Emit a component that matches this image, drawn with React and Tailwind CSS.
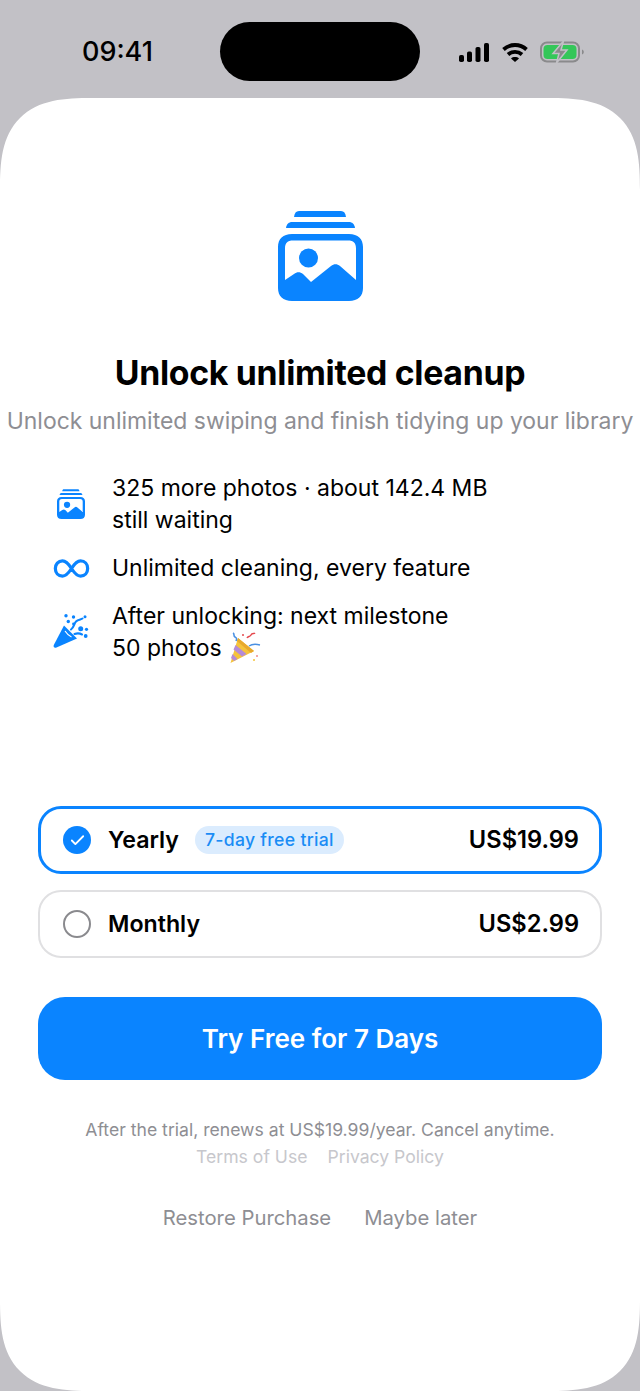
import { Check } from 'lucide-react';

const font = { fontFamily: 'Inter, "Noto Sans", sans-serif' };

function PhotoStack({ className }) {
  return (
    <svg viewBox="0 0 85 91" className={className} fill="#0a84ff">
      <path d="M16 7C16.500 3 18 1 21 1h42c3 0 4.500 2 5 6H16z" />
      <path d="M8 18c.5-4 3-6 6-6h57c3 0 5.500 2 6 6H8z" />
      <path
        fillRule="evenodd"
        d="M14 24h57c9 0 14 5 14 13v41c0 8-5 13-14 13H14C5 91 0 86 0 78V37c0-8 5-13 14-13zm1 6.500c-5.500 0-8 2.500-8 8V70l9-6c3-2.500 6-2.500 9 0l8 8 20-16c3-2.500 6-2.500 9 0L78 70V38.500c0-5.500-2.500-8-8-8H15z"
      />
      <circle cx="30.500" cy="48" r="9.500" />
    </svg>
  );
}

function Popper({ className }) {
  return (
    <svg viewBox="0 0 36 36" className={className} fill="#0a84ff">
      <path d="M11 11.500 24 24.500 3.500 33.500C1.500 34.300 0 33 .8 31L11 11.500z" />
      <path d="M12 17c2 3 4 5 6.500 6" fill="none" stroke="#fff" strokeWidth="1.200" />
      <circle cx="13" cy="1.800" r="1.700" />
      <circle cx="20.500" cy="3" r="1.700" />
      <circle cx="32" cy="2.800" r="1.500" />
      <circle cx="15.300" cy="7.500" r="1.700" />
      <circle cx="27.700" cy="14.700" r="2.500" />
      <circle cx="33.500" cy="15.300" r="1.600" />
      <circle cx="32.700" cy="22" r="1.900" />
      <circle cx="20.500" cy="10" r="1.400" />
      <path d="M18 15.500c3-2 3-6 5-8s5-2 6.500-3" fill="none" stroke="#0a84ff" strokeWidth="2.100" strokeLinecap="round" />
      <path d="M21.500 20c3-1 5-1 7.500.5" fill="none" stroke="#0a84ff" strokeWidth="2.100" strokeLinecap="round" />
    </svg>
  );
}

function PartyEmoji({ className }) {
  return (
    <svg viewBox="0 0 32 32" className={className}>
      <path d="M9 6 25 19 1.500 31z" fill="#f5c33b" />
      <path d="M6.500 13 17.500 22 13 24.500 4.500 17.500z" fill="#b58bd6" />
      <path d="M3.500 22 8.500 27 5 29 2 26z" fill="#b58bd6" />
      <path d="M9 6 25 19 22 21 8 9z" fill="#e8a92c" />
      <path d="M4 1c2 1 0 3 2 4s2 2 1 4" fill="none" stroke="#4a90e2" strokeWidth="1.600" />
      <path d="M18 6c1-2 3-1 4-3s3-1 4-2" fill="none" stroke="#e5484d" strokeWidth="1.500" />
      <path d="M20 14c3-2 7-2 11-1" fill="none" stroke="#4a90e2" strokeWidth="1.500" />
      <circle cx="14" cy="3" r="1" fill="#e5484d" />
      <circle cx="28" cy="24" r="1" fill="#f08a8a" />
      <circle cx="25" cy="28" r="1" fill="#f5c33b" />
    </svg>
  );
}

function Feature({ icon, children }) {
  return (
    <div className="flex items-center pl-[35px]">
      <div className="w-[72px] mr-[5px] flex justify-center shrink-0">{icon}</div>
      <div className="text-[23px] leading-[32px] text-black">{children}</div>
    </div>
  );
}

function PlanRow({ selected, name, price, badge }) {
  return (
    <div
      className={
        selected
          ? 'h-[68px] rounded-[23px] border-[3px] border-[#0a84ff] flex items-center pl-[22px] pr-[20px] bg-white'
          : 'h-[68px] rounded-[23px] border-2 border-[#e0e0e2] flex items-center pl-[23px] pr-[21px] bg-white'
      }
    >
      {selected ? (
        <div className="w-[28px] h-[28px] rounded-full bg-[#0a84ff] flex items-center justify-center">
          <Check size={17} color="#fff" strokeWidth={2.600} />
        </div>
      ) : (
        <div className="w-[28px] h-[28px] rounded-full border-2 border-[#8a8a8e]" />
      )}
      <span className="ml-[17px] text-[23.200px] font-semibold text-black">{name}</span>
      {badge && (
        <span className="ml-[16px] h-[28px] px-[10px] rounded-full bg-[#dbecfe] text-[#1a8cf5] text-[17.600px] font-medium flex items-center tracking-[0.300px]">
          {badge}
        </span>
      )}
      <span className="ml-auto text-[23.650px] font-semibold text-black">{price}</span>
    </div>
  );
}

export default function App() {
  return (
    <div className="h-[1391px] w-[640px] bg-[#c2c1c6] flex flex-col overflow-hidden" style={font}>
      <div className="h-[98px] shrink-0 flex items-start relative">
        <span className="ml-[82px] mt-[35px] text-[27px] leading-[34px] font-medium text-black">09:41</span>
        <div className="absolute left-[220px] top-[22px] w-[200px] h-[59px] rounded-[30px] bg-black" />
        <div className="absolute left-[458px] top-[41px] flex items-center">
          <svg viewBox="0 0 32 21" className="w-[32px] h-[21px]" fill="#000">
            <rect x="1" y="13" width="5" height="7" rx="1.800" />
            <rect x="9" y="9.500" width="5" height="10.500" rx="1.800" />
            <rect x="17.500" y="5" width="5" height="15" rx="1.800" />
            <rect x="26" y="1" width="5" height="19" rx="1.800" />
          </svg>
          <svg viewBox="0 0 26 20" className="w-[26px] h-[20px] ml-[12px]" fill="none" stroke="#000" strokeWidth="3.800">
            <path d="M1.500 7.500C8 1.500 18 1.500 24.500 7.500" />
            <path d="M6 12.500c4-3.500 10-3.500 14 0" />
            <path d="M13 20 9 16.500c2-1.900 6-1.900 8 0z" fill="#000" stroke="none" />
          </svg>
          <svg viewBox="0 0 44 22" className="w-[44px] h-[22px] ml-[12px]">
            <rect x="1" y="1.500" width="38" height="19" rx="6" fill="none" stroke="#8a8a8c" strokeWidth="2" />
            <rect x="3.500" y="4" width="33" height="14" rx="4" fill="#34c759" />
            <path d="M42 8.500c1.300.4 1.800 1.300 1.800 2.500s-.5 2.100-1.800 2.500z" fill="#8a8a8c" />
            <path d="M23.500 0 13 12.500h6L16.500 22 27 9h-6z" fill="#8a8a8c" stroke="#c2c1c6" strokeWidth="1.500" />
          </svg>
        </div>
      </div>

      <div className="flex-1 bg-white rounded-[92px] [corner-shape:superellipse(1.5)] flex flex-col items-stretch overflow-hidden">
        <div className="flex justify-center pt-[112px]">
          <PhotoStack className="w-[85px] h-[91px]" />
        </div>
        <h1 className="mt-[50px] text-center text-[33.800px] leading-[44px] font-bold text-black tracking-[-0.300px]">
          Unlock unlimited cleanup
        </h1>
        <p className="mt-[10px] text-center text-[22.950px] leading-[32px] text-[#8e8e93] whitespace-nowrap">
          Unlock unlimited swiping and finish tidying up your library
        </p>

        <div className="mt-[35px] flex flex-col gap-[16px]">
          <Feature icon={<PhotoStack className="w-[28px] h-[30px]" />}>
            325 more photos · about 142.4 MB
            <br />
            still waiting
          </Feature>
          <Feature
            icon={
              <svg viewBox="0 0 38 20" className="w-[37px] h-[19px]" fill="none" stroke="#0a84ff" strokeWidth="3.400">
                <path d="M19 10C15.500 4.500 12.800 2 9.500 2 5 2 2 5.500 2 10s3 8 7.500 8c3.300 0 6-2.500 9.500-8zm0 0c3.500-5.500 6.200-8 9.500-8C33 2 36 5.500 36 10s-3 8-7.500 8c-3.300 0-6-2.500-9.500-8z" />
              </svg>
            }
          >
            Unlimited cleaning, every feature
          </Feature>
          <Feature icon={<Popper className="w-[36px] h-[36px]" />}>
            After unlocking: next milestone
            <br />
            <span className="inline-flex items-center">
              50 photos
              <PartyEmoji className="w-[32px] h-[32px] ml-[7px]" />
            </span>
          </Feature>
        </div>

        <div className="mt-[142px] mx-[38px] flex flex-col gap-[16px]">
          <PlanRow selected name="Yearly" price="US$19.99" badge="7-day free trial" />
          <PlanRow name="Monthly" price="US$2.99" />
        </div>

        <button className="mt-[39px] mx-[38px] h-[83px] rounded-[27px] bg-[#0a84ff] text-white text-[26px] font-semibold">
          Try Free for 7 Days
        </button>

        <p className="mt-[36px] text-center text-[17.600px] leading-[27px] text-[#8e8e93]">
          After the trial, renews at US$19.99/year. Cancel anytime.
        </p>
        <div className="flex justify-center gap-[20px] text-[17.600px] leading-[27px] text-[#c7c7cc]">
          <span>Terms of Use</span>
          <span>Privacy Policy</span>
        </div>
        <div className="mt-[34px] flex justify-center gap-[33px] text-[20.300px] leading-[28px] text-[#8e8e93]">
          <span>Restore Purchase</span>
          <span>Maybe later</span>
        </div>
      </div>
    </div>
  );
}
